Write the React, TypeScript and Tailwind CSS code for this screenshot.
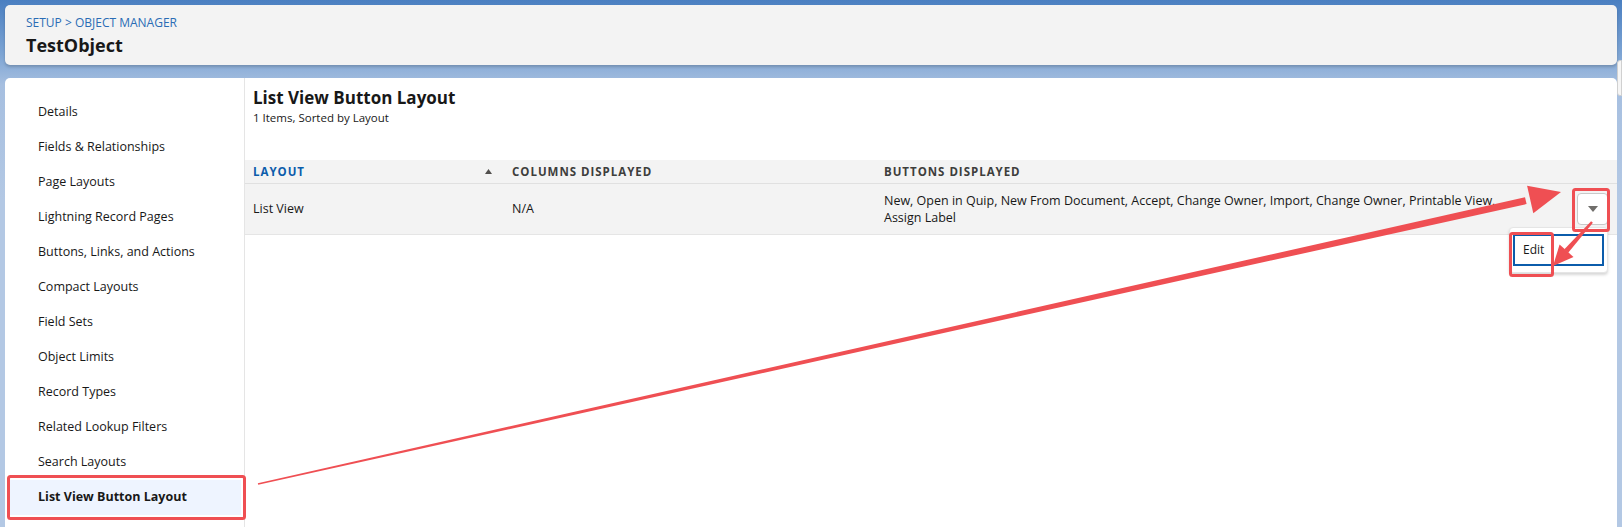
const navItems = [
  "Details",
  "Fields & Relationships",
  "Page Layouts",
  "Lightning Record Pages",
  "Buttons, Links, and Actions",
  "Compact Layouts",
  "Field Sets",
  "Object Limits",
  "Record Types",
  "Related Lookup Filters",
  "Search Layouts",
  "List View Button Layout",
];

function Annotations() {
  // red callouts drawn over the screenshot
  return (
    <svg className="pointer-events-none absolute inset-0" width="1622" height="527" viewBox="0 0 1622 527">
      <g fill="none" stroke="#ef4f53" strokeWidth="3">
        <rect x="8.5" y="476.5" width="236" height="42" rx="2" />
        <rect x="1573.5" y="189.5" width="35" height="41" rx="2" />
        <rect x="1510.5" y="233.5" width="42" height="42" rx="2" />
      </g>
      <g fill="#ef4f53">
        <polygon points="258.2,484.8 257.8,483.2 1525.0,197.2 1526.6,204.0" />
        <polygon points="1561,192 1527.1,185.8 1533.3,213.2" />
        <polygon points="1592.9,222.8 1591.1,221.2 1564.4,249.3 1568.2,252.7" />
        <polygon points="1553,266 1559.6,244.5 1573.5,257" />
      </g>
    </svg>
  );
}

export default function App() {
  return (
    <div className="relative h-[527px] w-[1622px] overflow-hidden bg-[linear-gradient(180deg,#4a7fc1_0px,#7ea5d4_55px,#a6bfe0_85px,#b3c8e4_200px)] font-['Open_Sans',sans-serif] text-[#181818]">
      <div className="flex h-full flex-col px-[5px] pt-[5px]">
        {/* Header */}
        <div className="h-[60px] w-[1612px] rounded-[5px] bg-[#f3f3f3] pl-[21px] pt-[10px] shadow-[0_2px_3px_rgba(0,0,0,0.18)]">
          <div className="text-[12px] leading-4 text-[#2a6cb5]">SETUP &gt; OBJECT MANAGER</div>
          <div className="mt-[2px] text-[18px] font-bold leading-6 text-[#181818]">TestObject</div>
        </div>

        {/* Main card */}
        <div className="mt-[13px] flex w-[1612px] flex-1 rounded-t-[5px] bg-white">
          {/* Sidebar */}
          <div className="w-[240px] shrink-0 border-r border-[#e5e5e5] pt-[17px]">
            {navItems.map((item, i) => {
              const active = i === navItems.length - 1;
              return (
                <div
                  key={item}
                  className={
                    active
                      ? "mx-[3px] flex h-[35px] items-center bg-[#eef4ff] pl-[30px] text-[12.5px] font-bold"
                      : "mx-[3px] flex h-[35px] items-center pl-[30px] text-[12.5px]"
                  }
                >
                  {item}
                </div>
              );
            })}
          </div>

          {/* Content */}
          <div className="flex-1 pt-[8px]">
            <div className="px-[8px]">
              <h1 className="text-[17px] font-bold leading-6">List View Button Layout</h1>
              <p className="text-[11.5px] leading-4 text-[#181818]">1 Items, Sorted by Layout</p>
            </div>

            <div className="mt-[34px]">
              {/* table header */}
              <div className="flex h-[24px] items-center border-b border-[#e0e0e0] bg-[#f3f3f3] text-[11.5px] font-bold uppercase tracking-[0.085em] text-[#3e3e3c]">
                <div className="flex w-[267px] items-center justify-between pl-[8px] pr-[20px]">
                  <span className="text-[#0b5cab]">Layout</span>
                  <svg width="7" height="5" viewBox="0 0 7 5">
                    <polygon points="3.5,0 7,5 0,5" fill="#514f4d" />
                  </svg>
                </div>
                <div className="w-[372px]">Columns Displayed</div>
                <div className="flex-1">Buttons Displayed</div>
              </div>

              {/* row */}
              <div className="flex h-[51px] items-center border-b border-[#e5e5e5] bg-[#f3f3f3] text-[12.5px]">
                <div className="w-[267px] pl-[8px]">List View</div>
                <div className="w-[372px]">N/A</div>
                <div className="flex-1 leading-[17px]">
                  <div>New, Open in Quip, New From Document, Accept, Change Owner, Import, Change Owner, Printable View,</div>
                  <div>Assign Label</div>
                </div>
                <div className="relative mr-[9px] flex h-[32px] w-[31px] items-center justify-center rounded-[4px] border border-[#c9c9c9] bg-white">
                  <svg width="10" height="6" viewBox="0 0 10 6">
                    <polygon points="0,0 10,0 5,6" fill="#706e6b" />
                  </svg>
                  {/* menu */}
                  <div className="absolute right-[-1px] top-[33px] w-[99px] rounded-[4px] border border-[#e5e5e5] bg-white px-[3px] py-[6px] shadow-[0_2px_3px_rgba(0,0,0,0.16)]">
                    <div className="flex h-[32px] items-center border-2 border-[#0b5cab] pl-[8px] text-[12px]">Edit</div>
                  </div>
                </div>
              </div>
            </div>
          </div>
        </div>
      </div>

      {/* scrollbar */}
      <div className="absolute right-0 top-[60px] h-[36px] w-[5px] rounded-l-[3px] border border-[#d0d0d0] bg-[#f5f5f5]" />

      <Annotations />
    </div>
  );
}
